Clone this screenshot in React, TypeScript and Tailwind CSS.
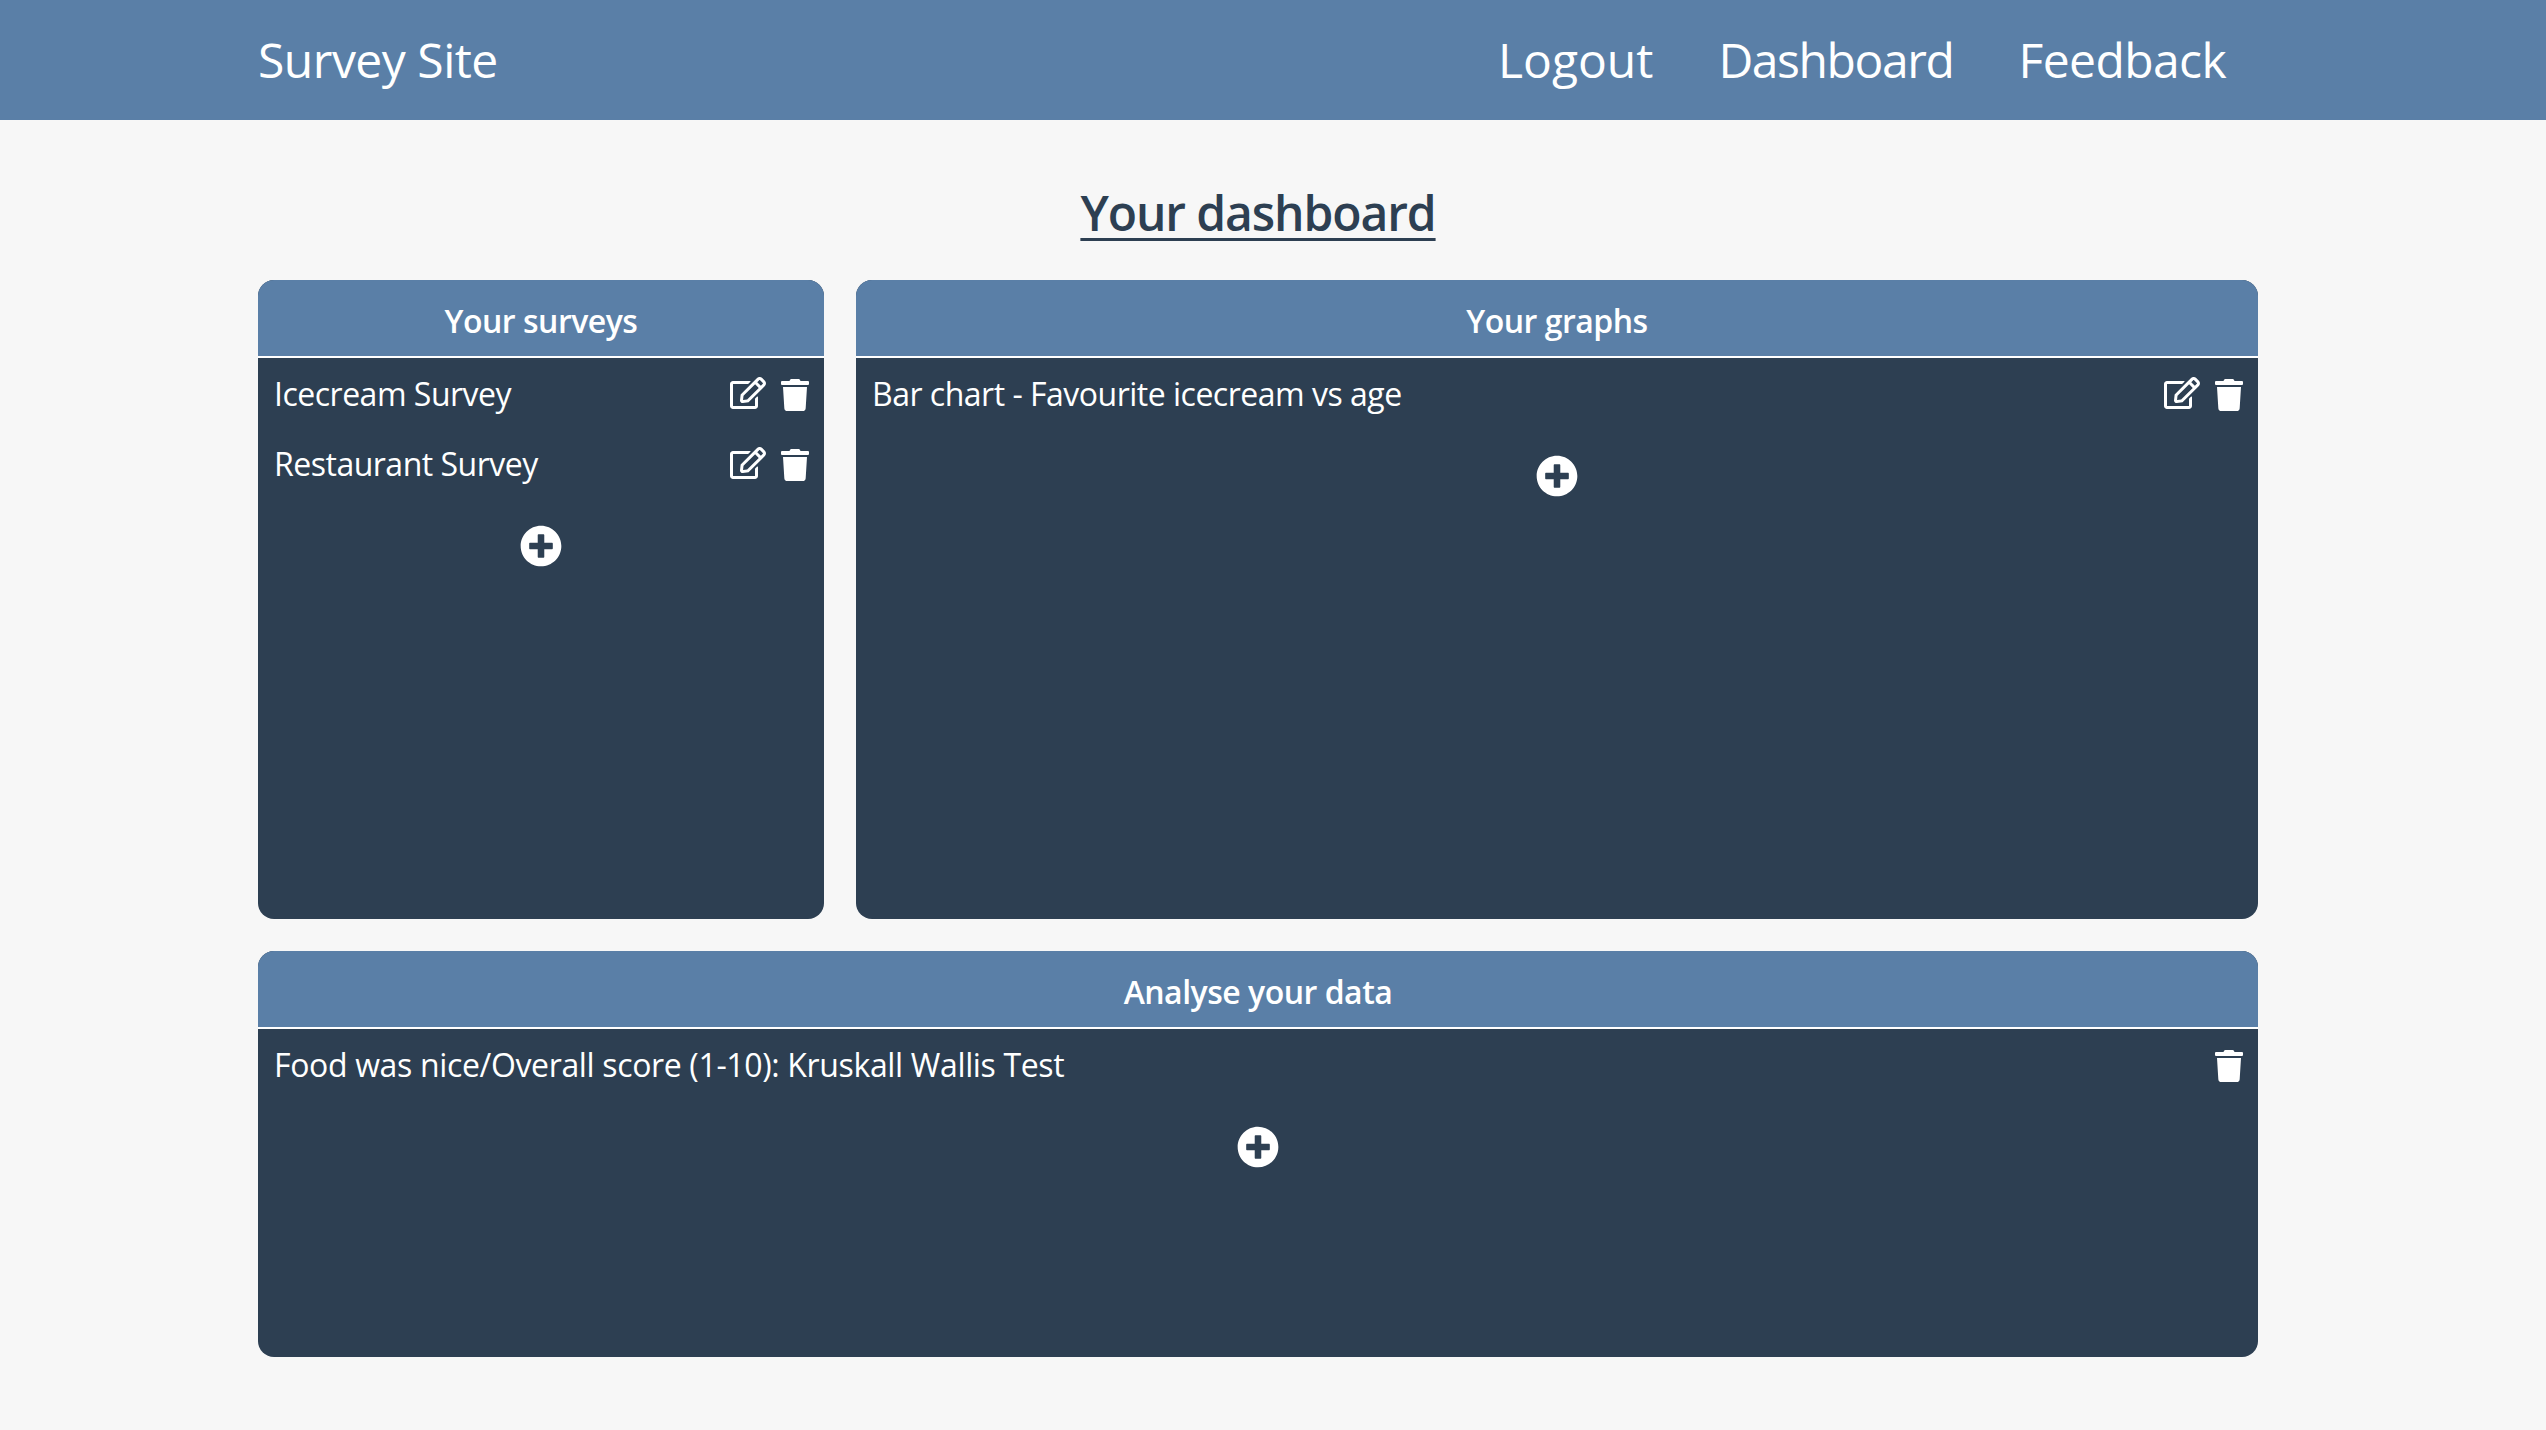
import { FaRegEdit, FaTrash, FaPlusCircle } from "react-icons/fa";

const font = "font-['Open_Sans',sans-serif]";

function Row({ label, edit = true, spacing = "tracking-[-0.5px]" }: { label: string; edit?: boolean; spacing?: string }) {
  return (
    <div className="flex h-[70px] items-center justify-between pl-4 pr-[15px]">
      <span className={`pb-[3px] text-[32px] leading-none text-white ${spacing}`}>{label}</span>
      <span className="flex items-center gap-[15px] pb-[2px] text-white">
        {edit && <FaRegEdit className="mb-[2px] h-[32px] w-[36px]" />}
        <FaTrash className="mt-[2px] h-[32px] w-[28px]" />
      </span>
    </div>
  );
}

function Card({ title, children, className }: { title: string; children: React.ReactNode; className: string }) {
  return (
    <section className={`flex flex-col overflow-hidden rounded-2xl bg-[#2d3f52] ${className}`}>
      <h2 className="flex h-[78px] shrink-0 items-center justify-center border-b-2 border-white bg-[#5a7fa7] pt-[5px] text-[32px] font-semibold tracking-[-0.5px] text-white">
        {title}
      </h2>
      <div className="flex flex-1 flex-col pt-[2px]">
        {children}
        <div className="flex justify-center pt-[25px] text-white">
          <FaPlusCircle className="size-[42px]" />
        </div>
      </div>
    </section>
  );
}

export default function App() {
  return (
    <div className={`min-h-[1430px] bg-[#f7f7f7] ${font}`}>
      <nav className="flex h-[120px] items-center justify-between bg-[#5a7fa7] pl-[258px] pr-[320px] text-[48px] text-white">
        <a className="tracking-[-0.5px]">Survey Site</a>
        <div className="flex gap-[65px]">
          <a className="tracking-[0px]">Logout</a>
          <a className="tracking-[-1.4px]">Dashboard</a>
          <a className="tracking-[-0.6px]">Feedback</a>
        </div>
      </nav>
      <main className="ml-[258px] w-[2000px]">
        <h1 className="flex h-[160px] items-center justify-center pt-[26px] text-[48px] font-semibold tracking-[-1.1px] text-[#2d3f52] underline decoration-[3px] underline-offset-[7px]">
          Your dashboard
        </h1>
        <div className="flex gap-8">
          <Card title="Your surveys" className="h-[639px] w-[566px]">
            <Row label="Icecream Survey" />
            <Row label="Restaurant Survey" />
          </Card>
          <Card title="Your graphs" className="h-[639px] flex-1">
            <Row label="Bar chart - Favourite icecream vs age" />
          </Card>
        </div>
        <Card title="Analyse your data" className="mt-8 h-[406px] w-full">
          <Row label="Food was nice/Overall score (1-10): Kruskall Wallis Test" edit={false} spacing="tracking-[-0.35px]" />
        </Card>
      </main>
    </div>
  );
}
